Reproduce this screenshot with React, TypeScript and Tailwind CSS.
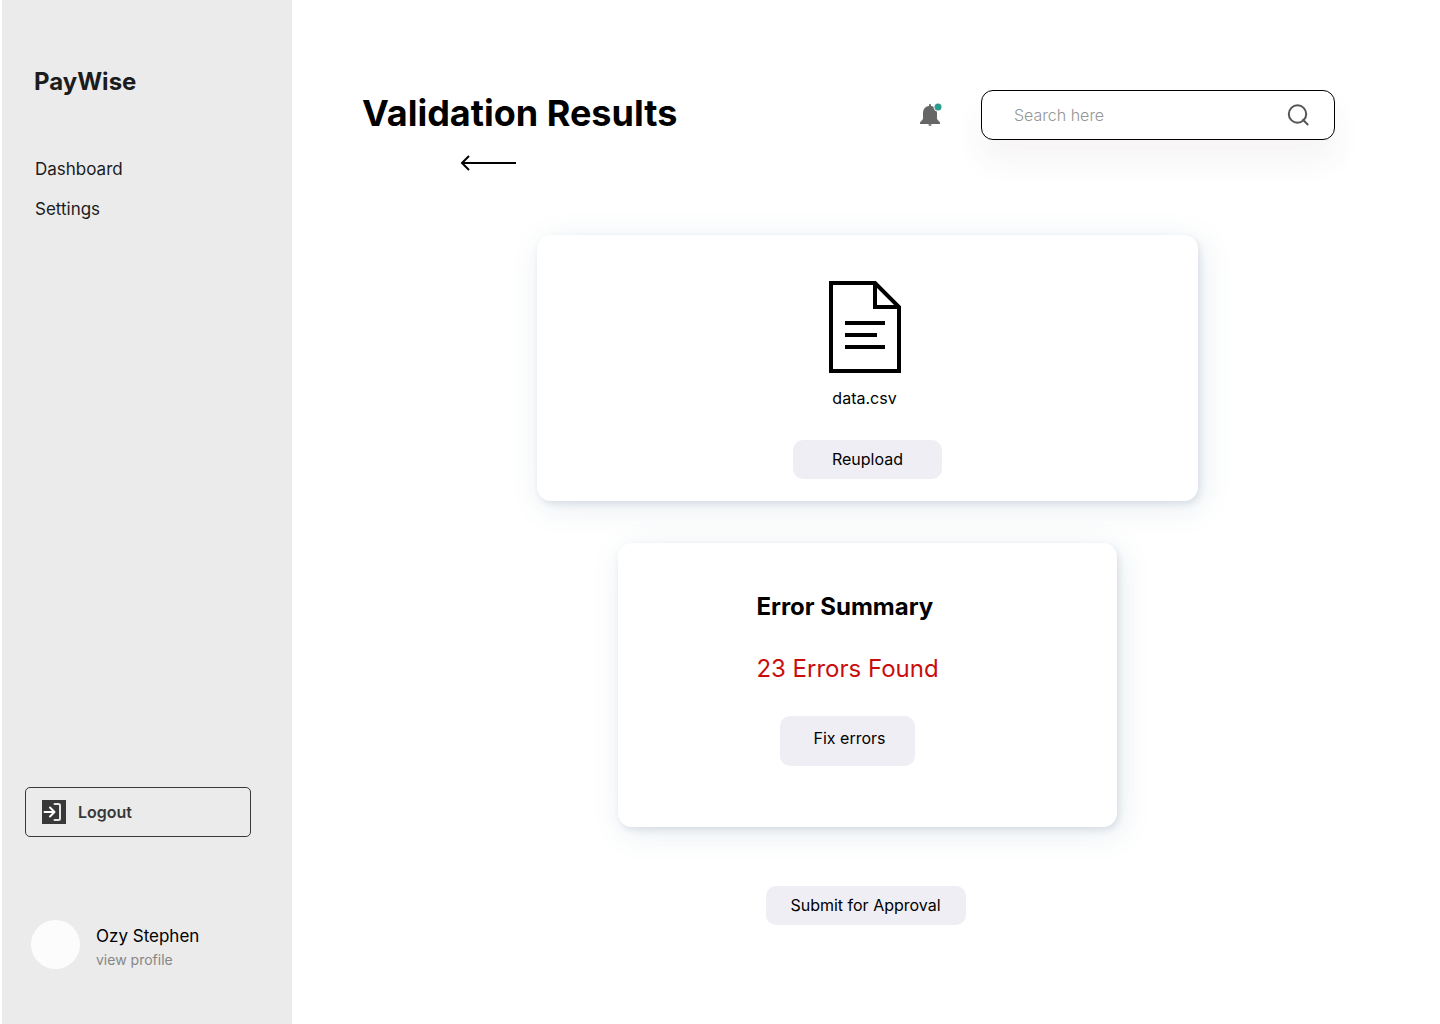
import React from "react";

function BellIcon() {
  return (
    <svg width="24" height="24" viewBox="0 0 24 24" aria-hidden="true">
      <path
        d="M10 3V2a1 1 0 0 1 2 0v1a6.500 6.500 0 0 1 6 6.500V16l3 3.500V21H1v-1.500L4 16V9.500A6.500 6.500 0 0 1 10 3z"
        fill="#666666"
      />
      <path d="M9.300 21.300h3.400a1.700 1.700 0 0 1-3.400 0z" fill="#666666" />
      <circle cx="19" cy="4" r="4.500" fill="#ffffff" />
      <circle cx="19" cy="4" r="3.500" fill="#2a9d8f" />
    </svg>
  );
}

function SearchIcon() {
  return (
    <svg width="24" height="24" viewBox="0 0 24 24" fill="none" stroke="#555555" strokeWidth="2" aria-hidden="true">
      <circle cx="11.500" cy="11" r="8.700" />
      <path d="M17.200 17l4.300 4.300" strokeLinecap="square" />
    </svg>
  );
}

function LogoutIcon() {
  return (
    <svg width="24" height="24" viewBox="0 0 24 24" fill="none" stroke="#ffffff" strokeWidth="2" strokeLinecap="round" strokeLinejoin="round" className="bg-[#383838]" aria-hidden="true">
      <path d="M2.500 12H12M8 7.500l4.500 4.500L8 16.500" />
      <path d="M12.500 4h4a1.500 1.500 0 0 1 1.500 1.500v13a1.500 1.500 0 0 1-1.500 1.500h-4" stroke="#e6e6e6" />
    </svg>
  );
}

function BackArrow() {
  return (
    <svg width="56" height="16" viewBox="0 0 56 16" fill="none" stroke="#000000" strokeWidth="2" aria-hidden="true">
      <path d="M56 8H2" />
      <path d="M9 1L2 8L9 15" />
    </svg>
  );
}

function FileIcon() {
  return (
    <svg width="72" height="92" viewBox="0 0 72 92" fill="none" stroke="#000000" strokeWidth="4" aria-hidden="true">
      <path d="M2 2H46L70 26V90H2Z" />
      <path d="M46 2V26H70" />
      <path d="M16 42H56M16 54H48M16 66H56" />
    </svg>
  );
}

function Sidebar() {
  return (
    <aside className="ml-0.5 flex w-[290px] shrink-0 flex-col bg-[#ebebeb] pt-16 pb-[53px]">
      <p className="pl-8 text-2xl leading-9 font-bold text-[#1c1c1c]">PayWise</p>
      <nav className="mt-[57px] flex flex-col gap-4 pl-[33px] text-[17px] leading-6 text-[#1c1c1c]">
        <a href="#dashboard">Dashboard</a>
        <a href="#settings">Settings</a>
      </nav>
      <button className="mt-auto mr-[41px] ml-[23px] flex h-[50px] items-center gap-3 rounded-[5px] border border-[#383838] px-4 text-base font-semibold text-[#383838]">
        <LogoutIcon />
        Logout
      </button>
      <div className="mt-[83px] flex items-start gap-4 pl-[29px]">
        <div className="size-[49px] rounded-full bg-[#fcfcfc]" />
        <div className="flex flex-col pt-1">
          <span className="text-[17px] leading-6 text-black">Ozy Stephen</span>
          <a href="#profile" className="text-sm leading-[23px] text-[#868686]">view profile</a>
        </div>
      </div>
    </aside>
  );
}

export default function App() {
  return (
    <div className="flex min-h-screen bg-white font-['Inter',sans-serif] text-black">
      <Sidebar />
      <div className="flex min-w-0 flex-1 flex-col pb-[99px]">
        <header className="flex items-start justify-between pt-[90px] pr-[105px] pl-[70px]">
          <div className="flex flex-col">
            <h1 className="text-4xl leading-[46px] font-bold">Validation Results</h1>
            <button aria-label="Back" className="mt-[19px] ml-[98px] w-14">
              <BackArrow />
            </button>
          </div>
          <div className="flex items-center gap-[38px]">
            <button aria-label="Notifications">
              <BellIcon />
            </button>
            <label className="flex h-[50px] w-[354px] items-center rounded-xl border border-black bg-white pr-6 pl-8 shadow-[0px_20px_30px_rgba(110,60,80,0.06)]">
              <input
                type="text"
                aria-label="Search"
                placeholder="Search here"
                className="min-w-0 flex-1 bg-transparent text-base outline-none placeholder:font-light placeholder:text-[#959595]"
              />
              <SearchIcon />
            </label>
          </div>
        </header>

        <main className="flex flex-col items-center pt-16 pl-[3px]">
          <section className="flex w-[661px] flex-col items-center rounded-[14px] bg-white pt-[46px] pb-[22px] shadow-[2px_3px_6px_rgba(50,80,120,0.12),4px_6px_30px_rgba(70,110,140,0.14)]">
            <div className="flex flex-col items-center pr-1.5">
              <FileIcon />
              <p className="mt-[13px] text-base leading-6">data.csv</p>
            </div>
            <button className="mt-[30px] h-[39px] w-[149px] rounded-[10px] bg-[#efeef4] pb-0.5 text-base">Reupload</button>
          </section>

          <section className="mt-[42px] flex w-[499px] flex-col items-center rounded-[14px] bg-white pt-[46px] pr-10 pb-[61px] shadow-[2px_3px_6px_rgba(50,80,120,0.12),4px_6px_30px_rgba(70,110,140,0.14)]">
            <div className="flex flex-col items-start">
              <h2 className="text-2xl leading-9 font-bold">Error Summary</h2>
              <p className="mt-[26px] text-2xl leading-9 text-[#c90d0d]">23 Errors Found</p>
            </div>
            <button className="mt-[29px] h-[50px] w-[135px] rounded-[10px] bg-[#efeef4] pb-1.5 pl-1 text-base">Fix errors</button>
          </section>

          <button className="mt-[59px] mr-1 h-[39px] w-[200px] rounded-[10px] bg-[#efeef4] pb-0.5 text-base">Submit for Approval</button>
        </main>
      </div>
    </div>
  );
}
